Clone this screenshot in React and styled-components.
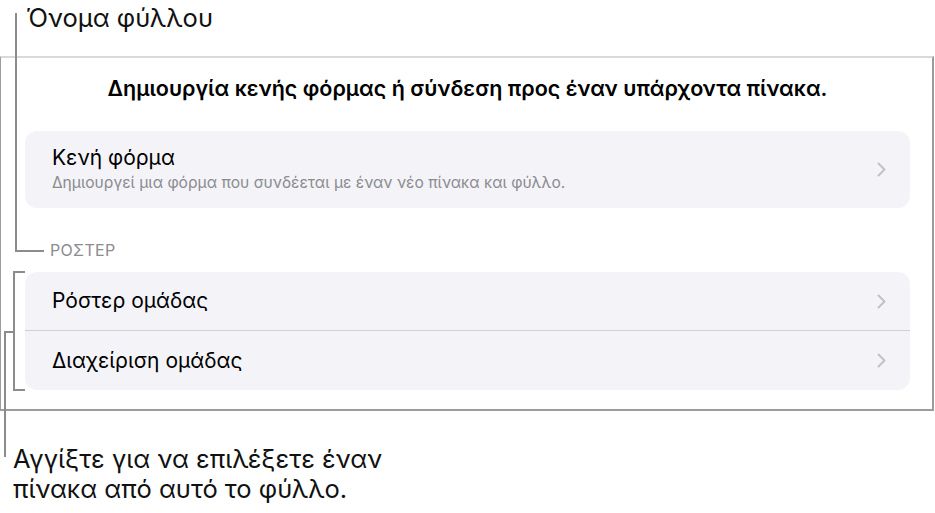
import React from 'react';
import styled, {createGlobalStyle} from 'styled-components';

const GlobalStyle = createGlobalStyle`
    body {
        margin: 0;
        background: #ffffff;
        font-family: Inter, 'Noto Sans', sans-serif;
        color: #000;
    }
`;

const Figure = styled.div`
    position: relative;
    width: 935px;
    height: 513px;
    overflow: hidden;
`;

const Callout = styled.div`
    font-size: 25.5px;
    line-height: 30px;
    color: #111;
    padding-left: ${p => p.indent}px;
`;

const TopCallout = styled(Callout)`
    height: 56px;
    padding-top: 3px;
    box-sizing: border-box;
`;

const BottomCallout = styled(Callout)`
    padding-top: 33px;
`;

const Frame = styled.div`
    width: 934px;
    height: 355px;
    box-sizing: border-box;
    border-top: 2px solid #d9d9d9;
    border-right: 2px solid #9c9c9c;
    border-bottom: 2px solid #9c9c9c;
    border-left: 1px solid #9c9c9c;
    padding: 18px 22px 0 24px;
    display: flex;
    flex-direction: column;
`;

const Heading = styled.div`
    font-size: 21.5px;
    font-weight: 600;
    line-height: 24px;
    text-align: center;
    margin-bottom: 31px;
`;

const Card = styled.div`
    background: #f4f4f8;
    border-radius: 12px;
    display: flex;
    flex-direction: column;
`;

const Row = styled.div`
    display: flex;
    align-items: center;
    height: ${p => p.h}px;
    padding: 0 24px 0 27px;
    & + & {
        border-top: 1px solid #d0d0d4;
    }
`;

const RowText = styled.div`
    flex: 1;
    display: flex;
    flex-direction: column;
    margin-top: ${p => p.shift || 0}px;
`;

const Title = styled.div`
    font-size: 21px;
    line-height: 26px;
`;

const Subtitle = styled.div`
    font-size: 15.6px;
    line-height: 18px;
    color: #8b8b90;
    margin-top: 3px;
`;

const SectionLabel = styled.div`
    font-size: 16px;
    line-height: 18px;
    color: #8b8b90;
    padding-left: 25px;
    margin: 33px 0 13px;
    letter-spacing: 0.3px;
`;

const Line = styled.div`
    position: absolute;
    background: #8c8c8c;
`;

const Chevron = () => (
    <svg width="9" height="15" viewBox="0 0 9 15">
        <path d="M1.5 1.5 L7.5 7.5 L1.5 13.5" fill="none" stroke="#c2c2c6" strokeWidth="2" strokeLinecap="round" strokeLinejoin="round" />
    </svg>
);

function App() {
    return (
        <Figure>
            <GlobalStyle />
            <TopCallout indent={26}>Όνομα φύλλου</TopCallout>

            <Frame>
                <Heading>Δημιουργία κενής φόρμας ή σύνδεση προς έναν υπάρχοντα πίνακα.</Heading>
                <Card>
                    <Row h={77}>
                        <RowText shift={-2}>
                            <Title>Κενή φόρμα</Title>
                            <Subtitle>Δημιουργεί μια φόρμα που συνδέεται με έναν νέο πίνακα και φύλλο.</Subtitle>
                        </RowText>
                        <Chevron />
                    </Row>
                </Card>
                <SectionLabel>ΡΟΣΤΕΡ</SectionLabel>
                <Card>
                    <Row h={58}>
                        <RowText><Title>Ρόστερ ομάδας</Title></RowText>
                        <Chevron />
                    </Row>
                    <Row h={59}>
                        <RowText><Title>Διαχείριση ομάδας</Title></RowText>
                        <Chevron />
                    </Row>
                </Card>
            </Frame>

            <BottomCallout indent={13}>
                Αγγίξτε για να επιλέξετε έναν<br />
                πίνακα από αυτό το φύλλο.
            </BottomCallout>

            {/* leader: sheet name */}
            <Line style={{left: 15, top: 13, width: 2, height: 239}} />
            <Line style={{left: 15, top: 250, width: 29, height: 2}} />

            {/* bracket round the roster group */}
            <Line style={{left: 13, top: 271, width: 2, height: 120}} />
            <Line style={{left: 13, top: 271, width: 12, height: 2}} />
            <Line style={{left: 13, top: 389, width: 12, height: 2}} />

            {/* leader: tap hint */}
            <Line style={{left: 4, top: 331, width: 10, height: 2}} />
            <Line style={{left: 4, top: 331, width: 2, height: 126}} />
        </Figure>
    );
}

export default App;
